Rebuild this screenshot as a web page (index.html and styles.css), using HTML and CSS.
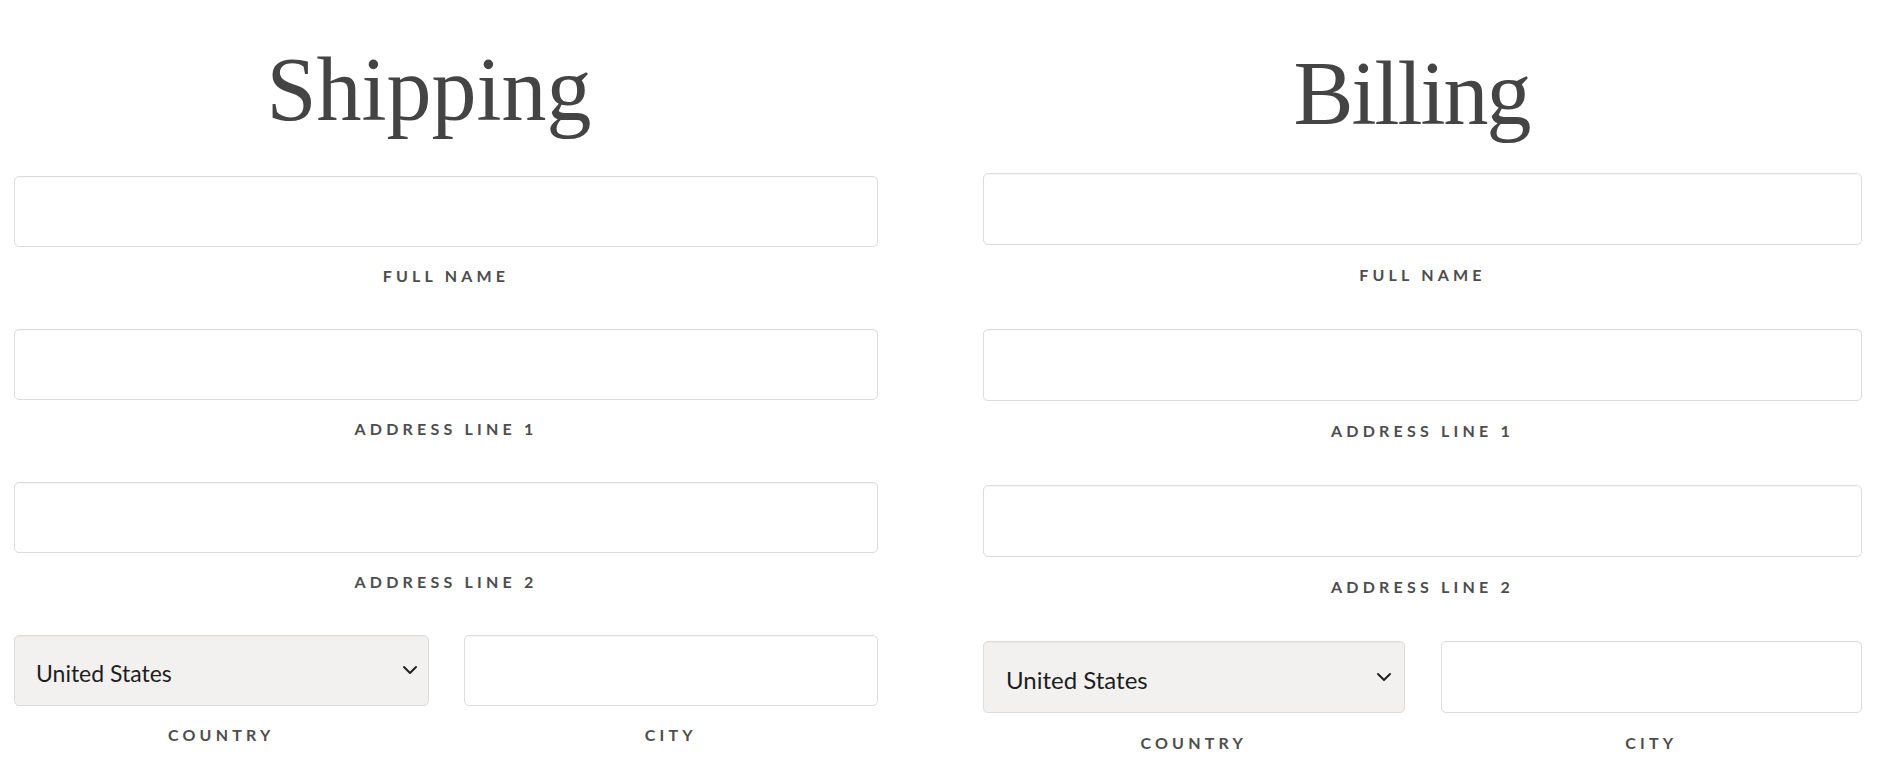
FILE: index.html
```html
<!DOCTYPE html>
<html lang="en">
<head>
<meta charset="utf-8">
<title>Shipping &amp; Billing</title>
<link rel="stylesheet" href="styles.css">
</head>
<body>
<main class="forms">
  <section class="col col--ship">
    <h1 class="col__title">Shipping</h1>
    <div class="field">
      <input class="field__input" type="text" id="s-name">
      <label class="field__label" for="s-name">Full Name</label>
    </div>
    <div class="field">
      <input class="field__input" type="text" id="s-a1">
      <label class="field__label" for="s-a1">Address Line 1</label>
    </div>
    <div class="field">
      <input class="field__input" type="text" id="s-a2">
      <label class="field__label" for="s-a2">Address Line 2</label>
    </div>
    <div class="pair">
      <div class="field">
        <div class="select">
          <select class="field__input select__el" id="s-country">
            <option>United States</option>
          </select>
          <svg class="select__chev" width="16" height="10" viewBox="0 0 16 10"><path d="M2 2 L8 8 L14 2" fill="none" stroke="#222" stroke-width="2" stroke-linecap="round" stroke-linejoin="round"/></svg>
        </div>
        <label class="field__label" for="s-country">Country</label>
      </div>
      <div class="field">
        <input class="field__input" type="text" id="s-city">
        <label class="field__label" for="s-city">City</label>
      </div>
    </div>
  </section>

  <section class="col col--bill">
    <h1 class="col__title">Billing</h1>
    <div class="field">
      <input class="field__input" type="text" id="b-name">
      <label class="field__label" for="b-name">Full Name</label>
    </div>
    <div class="field">
      <input class="field__input" type="text" id="b-a1">
      <label class="field__label" for="b-a1">Address Line 1</label>
    </div>
    <div class="field">
      <input class="field__input" type="text" id="b-a2">
      <label class="field__label" for="b-a2">Address Line 2</label>
    </div>
    <div class="pair">
      <div class="field">
        <div class="select">
          <select class="field__input select__el" id="b-country">
            <option>United States</option>
          </select>
          <svg class="select__chev" width="16" height="10" viewBox="0 0 16 10"><path d="M2 2 L8 8 L14 2" fill="none" stroke="#222" stroke-width="2" stroke-linecap="round" stroke-linejoin="round"/></svg>
        </div>
        <label class="field__label" for="b-country">Country</label>
      </div>
      <div class="field">
        <input class="field__input" type="text" id="b-city">
        <label class="field__label" for="b-city">City</label>
      </div>
    </div>
  </section>
</main>
</body>
</html>
```

FILE: styles.css
```css
* { box-sizing: border-box; }

html, body {
  margin: 0;
  background: #ffffff;
}

body {
  font-family: "Lato", "Open Sans", sans-serif;
  color: #333;
}

.forms {
  display: grid;
  grid-template-columns: 864px 879px;
  column-gap: 105px;
  padding-left: 14px;
}

.col {
  display: flex;
  flex-direction: column;
}

.col__title {
  margin: 0;
  font-family: "Liberation Serif", "Times New Roman", serif;
  font-weight: 400;
  font-size: 90px;
  line-height: 90px;
  color: #444;
  text-align: center;
}

.col--ship { padding-top: 45px; row-gap: 43px; }
.col--ship .col__title { margin-bottom: -2px; padding-right: 34px; }

.col--bill { padding-top: 49px; row-gap: 44px; }
.col--bill .col__title { margin-bottom: -10px; padding-right: 22px; letter-spacing: -2px; }

.field {
  display: flex;
  flex-direction: column;
}

.field__input {
  display: block;
  width: 100%;
  height: 71px;
  margin: 0;
  border: 1px solid #dcdcdc;
  border-radius: 5px;
  background: #fff;
  box-shadow: inset 0 1px 1px rgba(0,0,0,0.03);
  font: inherit;
  outline: none;
}

.col--bill .field__input { height: 72px; }

.field__label {
  display: block;
  margin-top: 19px;
  font-family: "Lato", "Open Sans", sans-serif;
  font-weight: 700;
  font-size: 16px;
  line-height: 20px;
  letter-spacing: 4.2px;
  text-transform: uppercase;
  color: #4d4d4d;
  text-align: center;
}

.col--bill .field__label { margin-top: 20px; }

.pair {
  display: grid;
  grid-template-columns: 1fr 1fr;
  column-gap: 35px;
}

.col--bill .pair { column-gap: 36px; }

.select {
  position: relative;
}

.select__el {
  appearance: none;
  -webkit-appearance: none;
  background: #f2f1ef;
  padding: 4px 44px 0 21px;
  font-family: "Lato", "Open Sans", sans-serif;
  font-size: 23px;
  color: #1e1e1e;
}

.col--bill .select__el { padding-left: 22px; font-size: 24px; }

.select__chev {
  position: absolute;
  right: 11px;
  top: 30px;
  pointer-events: none;
}

.col--bill .select__chev { right: 13px; top: 31px; }
```
